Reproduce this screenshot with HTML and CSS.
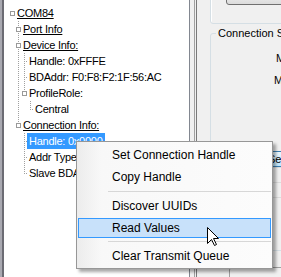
FILE: index.html
```html
<!DOCTYPE html>
<html>
<head>
  <title>BLE Device Monitor</title>
  <meta charset="UTF-8">
  <link rel="stylesheet" href="styles.css">
</head>
<body>
  <div class="window">
    <div class="tree">
      <div class="row"><span class="g"><i class="box"></i></span><span class="label u">COM84</span></div>
      <div class="row"><span class="g"></span><span class="g full"><i class="box"></i></span><span class="label u">Port Info</span></div>
      <div class="row"><span class="g"></span><span class="g full"><i class="box"></i></span><span class="label u">Device Info:</span></div>
      <div class="row"><span class="g"></span><span class="g full"></span><span class="g tee"></span><span class="label">Handle: 0xFFFE</span></div>
      <div class="row"><span class="g"></span><span class="g full"></span><span class="g tee"></span><span class="label">BDAddr: F0:F8:F2:1F:56:AC</span></div>
      <div class="row"><span class="g"></span><span class="g full"></span><span class="g half"><i class="box"></i></span><span class="label">ProfileRole:</span></div>
      <div class="row"><span class="g"></span><span class="g full"></span><span class="g"></span><span class="g elbow"></span><span class="label">Central</span></div>
      <div class="row"><span class="g"></span><span class="g half"><i class="box"></i></span><span class="label u">Connection Info:</span></div>
      <div class="row"><span class="g"></span><span class="g"></span><span class="g tee"></span><span class="label selected">Handle: 0x0000</span></div>
      <div class="row"><span class="g"></span><span class="g"></span><span class="g tee"></span><span class="label">Addr Type: Public</span></div>
      <div class="row"><span class="g"></span><span class="g"></span><span class="g elbow"></span><span class="label">Slave BDAddr: 00:00:00:00:00:00</span></div>
    </div>

    <div class="splitter"></div>

    <div class="panel">
      <div class="group-top">
        <div class="top-button">Connect</div>
      </div>
      <fieldset class="group">
        <legend>Connection Settings</legend>
        <div class="field">Min Connection Interval (ms):</div>
        <div class="field wide">Max Connection Interval (ms):</div>
        <div class="settings-button">Settings</div>
        <div class="grid-line"></div>
        <div class="grid-line"></div>
        <div class="grid-line"></div>
      </fieldset>
      <div class="group-bottom"></div>
    </div>
  </div>

  <!-- context menu over the tree -->
  <div class="menu">
    <div class="item">Set Connection Handle</div>
    <div class="item">Copy Handle</div>
    <div class="sep"></div>
    <div class="item">Discover UUIDs</div>
    <div class="item active">Read Values</div>
    <div class="sep"></div>
    <div class="item">Clear Transmit Queue</div>
  </div>

  <svg class="cursor" width="13" height="20" viewBox="0 0 13 20">
    <path d="M0.5 0.5 L0.5 16.5 L4.5 12.5 L7.5 18.5 L9.5 17.5 L6.5 11.5 L11.5 11.5 Z" fill="#fff" stroke="#000" stroke-width="1" stroke-linejoin="miter"/>
  </svg>
</body>
</html>
```

FILE: styles.css
```css
html, body {
  margin: 0;
  width: 281px;
  height: 277px;
  overflow: hidden;
}
body {
  background-color: #f0f0f0;
  font-family: "Liberation Sans", Arial, sans-serif;
  font-size: 11px;
  color: #000;
}
.window {
  display: flex;
  height: 277px;
}
/* tree view */
.tree {
  flex: none;
  width: 180px;
  margin-left: 2px;
  padding: 5px 0 0 5px;
  box-sizing: content-box;
  background-color: #fff;
  border-left: 2px solid #6c6c74;
  border-right: 1px solid #828790;
  box-shadow: -2px 0 0 #a9a9b1;
  letter-spacing: -0.25px;
}
.row {
  display: flex;
  height: 16px;
  white-space: nowrap;
}
.g {
  flex: none;
  width: 6px;
  height: 16px;
  display: flex;
  align-items: center;
}
.full {
  background: repeating-linear-gradient(#a0a0a0 0 1px, transparent 1px 2px) 3px 0 / 1px 100% no-repeat;
}
.half {
  background: repeating-linear-gradient(#a0a0a0 0 1px, transparent 1px 2px) 3px 0 / 1px 8px no-repeat;
}
.tee {
  background:
    repeating-linear-gradient(#a0a0a0 0 1px, transparent 1px 2px) 3px 0 / 1px 100% no-repeat,
    repeating-linear-gradient(to right, #a0a0a0 0 1px, transparent 1px 2px) 3px 8px / 3px 1px no-repeat;
}
.elbow {
  background:
    repeating-linear-gradient(#a0a0a0 0 1px, transparent 1px 2px) 3px 0 / 1px 9px no-repeat,
    repeating-linear-gradient(to right, #a0a0a0 0 1px, transparent 1px 2px) 3px 8px / 3px 1px no-repeat;
}
.box {
  display: block;
  width: 3px;
  height: 3px;
  margin-left: 1px;
  border: 1px solid #9a9a9a;
  background-color: #fff;
}
.label {
  padding: 0 2px;
  line-height: 16px;
}
.label.u {
  text-decoration: underline;
}
.label.selected {
  background-color: #3399ff;
  color: #fff;
}
/* splitter between the two panes */
.splitter {
  flex: none;
  width: 1px;
  margin-left: 4px;
  border-left: 1px solid #a0a0a0;
  border-right: 1px solid #7a7a7a;
}
/* right pane */
.panel {
  flex: none;
  width: 260px;
  padding-left: 13px;
  white-space: nowrap;
}
.group-top {
  box-sizing: border-box;
  height: 34px;
  margin-top: -10px;
  padding: 0 0 0 15px;
  border: 1px solid #d5dfe5;
  border-radius: 3px;
  box-shadow: inset 1px 1px 0 #fff;
}
.top-button {
  box-sizing: border-box;
  width: 120px;
  height: 14px;
  border: 1px solid #707070;
  border-radius: 3px;
  background: linear-gradient(#f2f2f2, #dcdcdc);
  color: transparent;
}
.group {
  margin: 3px 0 0 0;
  padding: 7px 0 0 0;
  height: 215px;
  border: 1px solid #d5dfe5;
  border-radius: 3px;
}
.group legend {
  margin-left: 5px;
  padding: 0 2px;
  line-height: 13px;
}
.field {
  height: 22px;
  line-height: 22px;
  padding-left: 65px;
}
.field.wide {
  padding-left: 63px;
}
.settings-button {
  box-sizing: border-box;
  width: 80px;
  height: 16px;
  margin: 60px 0 0 52px;
  padding-left: 4px;
  line-height: 14px;
  border: 1px solid #3c7fb1;
  border-radius: 3px;
  background: linear-gradient(#eaf6fd, #bee6fd);
}
.grid-line {
  height: 14px;
  margin-left: 58px;
  border-top: 1px solid #dcdcdc;
}
.grid-line:first-of-type {
  margin-top: 25px;
}
.group-bottom {
  height: 20px;
  margin: 16px 0 0 19px;
  border: 1px solid #a0a0a0;
  border-radius: 3px;
  background-color: #f0f0f0;
}
/* context menu */
.menu {
  position: absolute;
  left: 76px;
  top: 141px;
  width: 193px;
  padding: 2px 1px 1px;
  border: 1px solid #979797;
  background: linear-gradient(to right, #ececec, #f8f8f8 24px, #fcfcfc);
  box-shadow: 3px 3px 3px rgba(0, 0, 0, 0.35);
  font-size: 12px;
  white-space: nowrap;
}
.item {
  height: 22px;
  line-height: 22px;
  padding-left: 34px;
}
.item.active {
  height: 18px;
  line-height: 18px;
  margin: 1px 0;
  padding-left: 33px;
  border: 1px solid #3399ff;
  background-color: #c8e1fa;
}
.sep {
  height: 2px;
  margin: 3px 0 1px 30px;
  border-top: 1px solid #d7d7d7;
}
.cursor {
  position: absolute;
  left: 207px;
  top: 227px;
}
```
